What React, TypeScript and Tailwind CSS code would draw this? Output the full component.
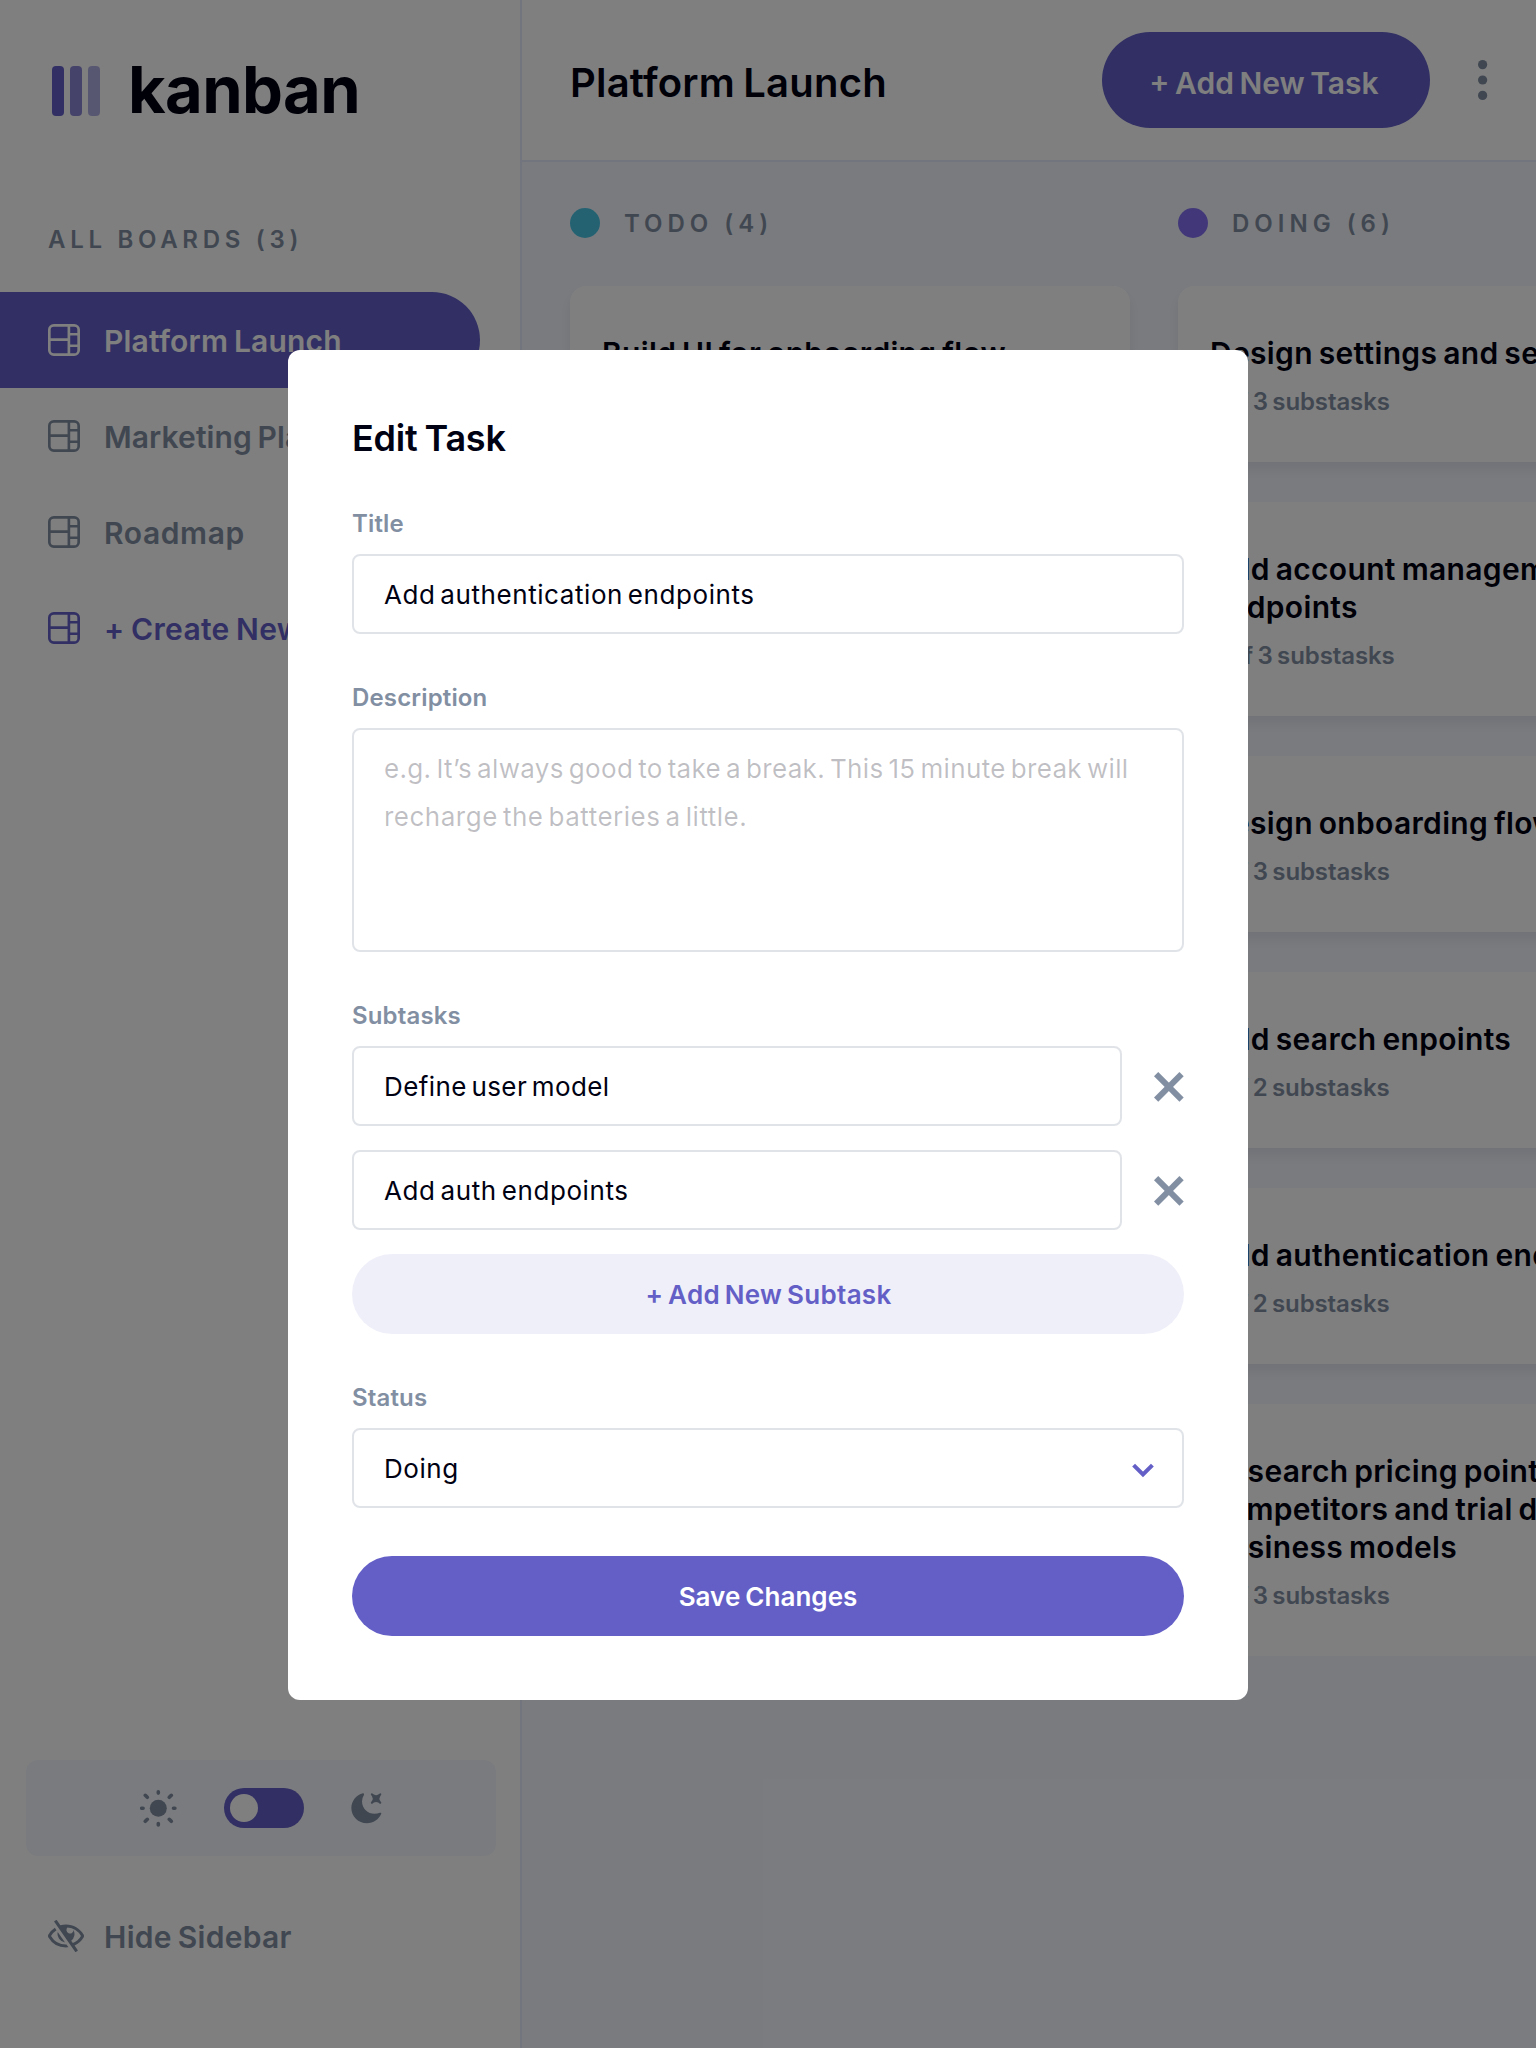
import type { ReactNode } from "react";

type Task = { lines: string[]; meta: string };

const doing: Task[] = [
  { lines: ["Design settings and search pages"], meta: "1 of 3 substasks" },
  { lines: ["Add account management", "endpoints"], meta: "2 of 3 substasks" },
  { lines: ["Design onboarding flow"], meta: "1 of 3 substasks" },
  { lines: ["Add search enpoints"], meta: "1 of 2 substasks" },
  { lines: ["Add authentication endpoints"], meta: "1 of 2 substasks" },
  {
    lines: ["Research pricing points of various", "competitors and trial different", "business models"],
    meta: "1 of 3 substasks",
  },
];

const todo: Task[] = [{ lines: ["Build UI for onboarding flow"], meta: "0 of 3 substasks" }];

function BoardIcon() {
  return (
    <svg className="h-8 w-8 shrink-0" viewBox="0 0 16 16" fill="currentColor">
      <path d="M0 2.889A2.889 2.889 0 0 1 2.889 0H13.11A2.889 2.889 0 0 1 16 2.889V13.11A2.888 2.888 0 0 1 13.111 16H2.89A2.889 2.889 0 0 1 0 13.111V2.89Zm1.333 5.555v4.667c0 .859.697 1.556 1.556 1.556h6.889V8.444H1.333Zm8.445-1.333V1.333h-6.89A1.556 1.556 0 0 0 1.334 2.89V7.11h8.445Zm4.889-1.333H11.11v4.444h3.556V5.778Zm0 5.778H11.11v3.11h2a1.556 1.556 0 0 0 1.556-1.555v-1.555Zm0-7.112V2.89a1.555 1.555 0 0 0-1.556-1.556h-2v3.111h3.556Z" />
    </svg>
  );
}

function SunIcon() {
  return (
    <svg className="h-[38px] w-[38px]" viewBox="0.7 -0.3 38 38" fill="none" stroke="#828FA3" strokeWidth="3.6" strokeLinecap="round">
      <circle cx="19" cy="19" r="8.5" fill="#828FA3" stroke="none" />
      <path d="M19 2.4v1.4M19 34.2v1.4M2.4 19h1.4M34.2 19h1.4M6 6l2 2M30 30l2 2M6 32l2-2M30 8l2-2" />
    </svg>
  );
}

function MoonIcon() {
  return (
    <svg className="h-8 w-8" viewBox="0 0 16 16" fill="#828FA3">
      <path d="M6.474.682c.434-.11.718.406.481.78A6.067 6.067 0 0 0 6.01 4.72c0 3.418 2.827 6.187 6.314 6.187.89.002 1.77-.182 2.584-.54.408-.18.894.165.724.57-1.16 2.775-3.944 4.73-7.194 4.73-4.292 0-7.771-3.41-7.771-7.615 0-3.541 2.466-6.518 5.807-7.37Zm8.433.07c.442-.294.969.232.674.674l-.525.787a1.943 1.943 0 0 0 0 2.157l.525.788c.295.441-.232.968-.674.673l-.787-.525a1.943 1.943 0 0 0-2.157 0l-.786.525c-.442.295-.97-.232-.675-.673l.525-.788a1.943 1.943 0 0 0 0-2.157l-.525-.787c-.295-.442.232-.968.674-.673l.787.525a1.943 1.943 0 0 0 2.157 0l.787-.526Z" />
    </svg>
  );
}

function EyeSlashIcon() {
  return (
    <svg className="h-8 w-9" viewBox="0 0 18 16" fill="#828FA3">
      <path d="M8.522 11.223a4.252 4.252 0 0 1-3.654-5.22l3.654 5.22ZM9 12.25A8.685 8.685 0 0 1 1.5 8a8.612 8.612 0 0 1 2.76-2.864l-.86-1.23A10.112 10.112 0 0 0 .208 7.238a1.5 1.5 0 0 0 0 1.524A10.187 10.187 0 0 0 9 13.75c.414 0 .828-.025 1.239-.074l-1-1.43A8.88 8.88 0 0 1 9 12.25Zm8.792-3.488a10.14 10.14 0 0 1-4.486 4.046l1.504 2.148a.375.375 0 0 1-.092.523l-.648.453a.375.375 0 0 1-.523-.092L3.19 1.044A.375.375 0 0 1 3.282.52L3.93.068a.375.375 0 0 1 .523.092l1.735 2.479A9.308 9.308 0 0 1 9 2.25c3.746 0 7.031 2 8.792 4.988a1.5 1.5 0 0 1 0 1.524ZM16.5 8a8.674 8.674 0 0 0-6.755-4.219A1.75 1.75 0 1 0 12.75 5v-.001a4.25 4.25 0 0 1-1.154 5.366l.834 1.192A8.641 8.641 0 0 0 16.5 8Z" />
    </svg>
  );
}

function CrossIcon() {
  return (
    <svg className="mt-0.5 h-[30px] w-[30px] shrink-0" viewBox="0 0 15 15" fill="#828FA3">
      <path d="m12.728 0 2.122 2.122L2.122 14.85 0 12.728z" />
      <path d="M0 2.122 2.122 0 14.85 12.728l-2.122 2.122z" />
    </svg>
  );
}

function NavItem({ label, tone }: { label: string; tone: string }) {
  return (
    <div className={`flex h-24 w-[480px] items-center gap-6 rounded-r-full pl-12 ${tone}`}>
      <BoardIcon />
      <span className="pt-0.5 text-[30px] leading-[38px] font-semibold whitespace-nowrap">{label}</span>
    </div>
  );
}

function Sidebar() {
  return (
    <aside className="flex w-[522px] shrink-0 flex-col border-r-2 border-[#E4EBFA] bg-white">
      <div className="flex h-[132px] items-end pb-4 pl-[52px]">
        <div className="flex gap-1.5">
          <div className="h-[50px] w-3 rounded bg-[#635FC7]" />
          <div className="h-[50px] w-3 rounded bg-[#635FC7] opacity-75" />
          <div className="h-[50px] w-3 rounded bg-[#635FC7] opacity-50" />
        </div>
        <span className="ml-7 text-[65px] leading-[53px] font-bold tracking-[-0.6px] text-[#000112]">kanban</span>
      </div>
      <h3 className="mt-[93px] pl-12 text-[24px] leading-[30px] font-semibold tracking-[4.7px] text-[#828FA3]">ALL BOARDS (3)</h3>
      <nav className="mt-[37px] flex flex-col">
        <NavItem label="Platform Launch" tone="bg-[#635FC7] tracking-[0.2px] text-white [word-spacing:-2px]" />
        <NavItem label="Marketing Plan" tone="tracking-[0.1px] text-[#828FA3] [word-spacing:-2px]" />
        <NavItem label="Roadmap" tone="tracking-[0.6px] text-[#828FA3]" />
        <NavItem label="+ Create New Board" tone="tracking-[0.35px] text-[#635FC7] [word-spacing:-1.5px]" />
      </nav>
      <div className="mt-auto ml-[26px] flex h-24 w-[470px] items-center justify-center rounded-xl bg-[#F4F7FD]">
        <SunIcon />
        <div className="mr-[46px] ml-[46px] flex h-10 w-20 items-center rounded-full bg-[#635FC7] pl-1.5">
          <div className="h-7 w-7 rounded-full bg-white" />
        </div>
        <MoonIcon />
      </div>
      <div className="mt-16 mb-24 flex h-8 items-center gap-5 pl-12">
        <EyeSlashIcon />
        <span className="pt-0.5 text-[30px] leading-[38px] font-semibold tracking-[0.3px] text-[#828FA3] [word-spacing:-2px]">Hide Sidebar</span>
      </div>
    </aside>
  );
}

function Header() {
  return (
    <header className="flex h-[162px] shrink-0 items-center border-b-2 border-[#E4EBFA] bg-white pr-12 pl-12">
      <h1 className="pt-1.5 text-[40px] leading-[50px] font-semibold tracking-[0.2px] whitespace-nowrap text-[#000112] [word-spacing:-2px]">Platform Launch</h1>
      <button className="ml-auto h-24 w-[328px] shrink-0 rounded-full bg-[#635FC7] pt-[7px] pr-1 text-[30px] font-semibold text-white [word-spacing:-2px]">
        + Add New Task
      </button>
      <svg className="ml-12 h-10 w-2.5 shrink-0" viewBox="0 0 5 20" fill="#828FA3">
        <circle cx="2.308" cy="2.308" r="2.308" />
        <circle cx="2.308" cy="10" r="2.308" />
        <circle cx="2.308" cy="17.692" r="2.308" />
      </svg>
    </header>
  );
}

function Column({ name, dot, tasks }: { name: string; dot: string; tasks: Task[] }) {
  return (
    <section className="w-[560px] shrink-0">
      <div className="flex h-[30px] items-center gap-6">
        <span className={`h-[30px] w-[30px] rounded-full ${dot}`} />
        <h2 className="pt-0.5 text-[24px] leading-[30px] font-semibold tracking-[5px] text-[#828FA3]">{name}</h2>
      </div>
      <div className="mt-12 flex flex-col gap-10">
        {tasks.map((task, i) => (
          <article
            key={task.lines[0]}
            className={`rounded-2xl bg-white px-8 pt-12 pb-[45px] ${i === 5 ? "" : "shadow-[0_8px_12px_rgba(54,78,126,0.1)]"}`}
          >
            <h4 className="text-[30px] leading-[38px] font-semibold tracking-[0.33px] whitespace-nowrap text-[#000112] [word-spacing:-2px]">
              {task.lines.map((line) => (
                <span key={line} className="block">{line}</span>
              ))}
            </h4>
            <p className="mt-[15px] text-[24px] leading-[30px] font-semibold tracking-[-0.1px] text-[#828FA3] [word-spacing:-1.5px]">{task.meta}</p>
          </article>
        ))}
      </div>
    </section>
  );
}

function Field({ label, children }: { label: string; children: ReactNode }) {
  return (
    <div className="mt-12">
      <div className="h-[46px] pt-px text-[24px] leading-[30px] font-semibold tracking-[0.15px] text-[#828FA3]">{label}</div>
      {children}
    </div>
  );
}

function Box({ children, className = "" }: { children: ReactNode; className?: string }) {
  return (
    <div className={`flex h-20 items-center rounded-lg border-2 border-[#828FA3]/25 px-[30px] text-[26px] font-normal text-[#000112] [word-spacing:-3px] ${className}`}>
      {children}
    </div>
  );
}

function EditTask() {
  return (
    <div className="h-[1350px] w-[960px] rounded-xl bg-white p-16">
      <h2 className="h-[46px] text-[36px] leading-[48px] font-semibold tracking-[-0.2px] text-[#000112] [word-spacing:-2px]">Edit Task</h2>
      <Field label="Title">
        <Box className="tracking-[0.57px]">Add authentication endpoints</Box>
      </Field>
      <Field label="Description">
        <div className="h-56 rounded-lg border-2 border-[#828FA3]/25 px-[30px] pt-[15px] text-[26px] leading-[48px] tracking-[0.34px] whitespace-nowrap text-[#000112]/25 [word-spacing:-2.7px]">
          e.g. It’s always good to take a break. This 15 minute break will
          <br />
          <span className="tracking-[0.5px]">recharge the batteries a little.</span>
        </div>
      </Field>
      <Field label="Subtasks">
        <div className="flex flex-col gap-6">
          <div className="flex items-center gap-8">
            <Box className="flex-1 tracking-[0.4px]">Define user model</Box>
            <CrossIcon />
          </div>
          <div className="flex items-center gap-8">
            <Box className="flex-1 tracking-[0.6px]">Add auth endpoints</Box>
            <CrossIcon />
          </div>
          <button className="h-20 rounded-full bg-[#635FC7]/10 pl-px text-[26px] font-semibold tracking-[0.3px] text-[#635FC7] [word-spacing:-2px]">+ Add New Subtask</button>
        </div>
      </Field>
      <Field label="Status">
        <Box className="justify-between tracking-[0.55px]">
          <span>Doing</span>
          <svg className="mt-[3px] -mr-0.5 h-4 w-[22px]" viewBox="0 0 11 8" fill="none" stroke="#635FC7" strokeWidth="2">
            <path d="M.798 1.549 5.497 6.247l4.698-4.698" />
          </svg>
        </Box>
      </Field>
      <button className="mt-12 h-20 w-full rounded-full bg-[#635FC7] text-[26px] font-semibold tracking-[0.02px] text-white [word-spacing:-1.5px]">Save Changes</button>
    </div>
  );
}

export default function App() {
  return (
    <div className="relative flex h-[2048px] w-[1536px] overflow-hidden font-['Inter',sans-serif]">
      <Sidebar />
      <div className="flex min-w-0 flex-1 flex-col">
        <Header />
        <main className="flex flex-1 gap-12 overflow-hidden bg-[#F4F7FD] pt-[46px] pl-12">
          <Column name="TODO (4)" dot="bg-[#49C4E5]" tasks={todo} />
          <Column name="DOING (6)" dot="bg-[#8471F2]" tasks={doing} />
        </main>
      </div>
      <div className="absolute inset-0 flex items-center justify-center bg-black/50 pt-0.5">
        <EditTask />
      </div>
    </div>
  );
}
